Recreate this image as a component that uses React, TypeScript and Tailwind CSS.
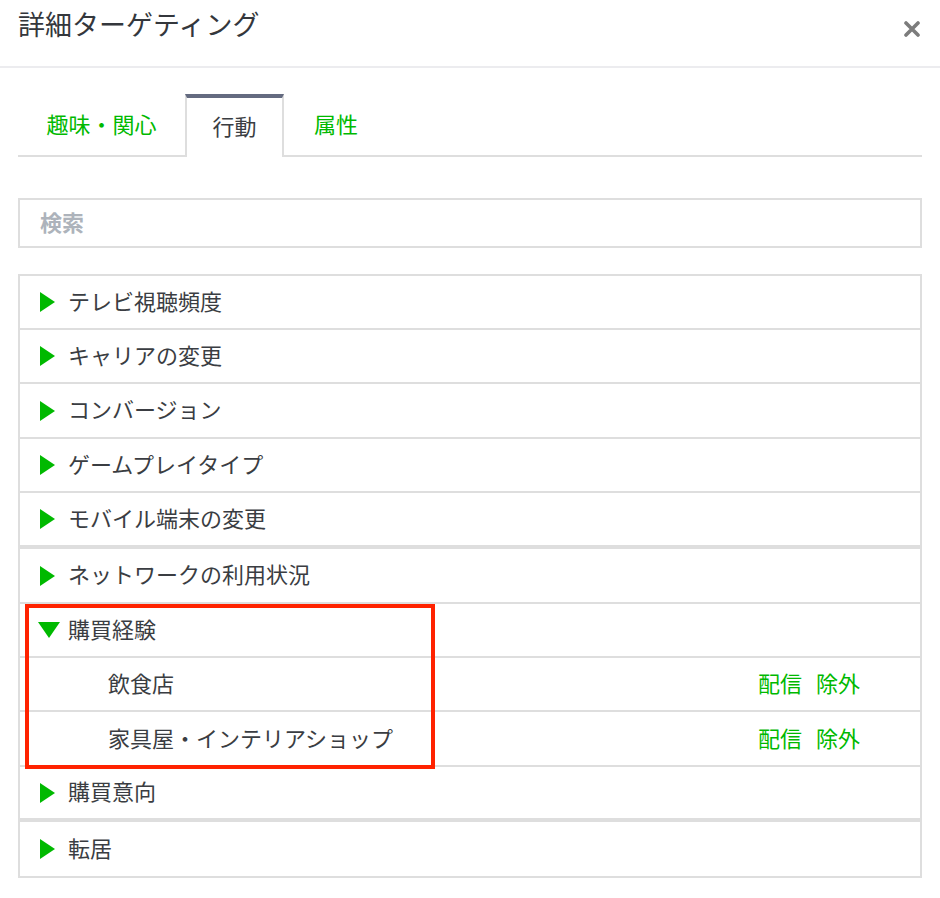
import React from "react";

const font = {
  fontFamily: '"Noto Sans CJK JP", "Noto Sans", sans-serif',
};

type RowData = {
  label: string;
  kind: "closed" | "open" | "child";
  cls: string; // height + bottom border
};

const line = "border-b-2 border-[#dedede]";
const thick = "border-b-[4px] border-[#dedede]";

const rows: RowData[] = [
  { label: "テレビ視聴頻度", kind: "closed", cls: `h-[54px] ${line}` },
  { label: "キャリアの変更", kind: "closed", cls: `h-[54px] ${line}` },
  { label: "コンバージョン", kind: "closed", cls: `h-[55px] ${line}` },
  { label: "ゲームプレイタイプ", kind: "closed", cls: `h-[54px] ${line}` },
  { label: "モバイル端末の変更", kind: "closed", cls: `h-[56px] ${thick}` },
  { label: "ネットワークの利用状況", kind: "closed", cls: `h-[55px] ${line}` },
  { label: "購買経験", kind: "open", cls: `h-[54px] ${line}` },
  { label: "飲食店", kind: "child", cls: `h-[54px] ${line}` },
  { label: "家具屋・インテリアショップ", kind: "child", cls: `h-[55px] ${line}` },
  { label: "購買意向", kind: "closed", cls: `h-[55px] ${thick}` },
  { label: "転居", kind: "closed", cls: "h-[54px]" },
];

function Arrow({ open }: { open?: boolean }) {
  if (open) {
    return (
      <svg width="22" height="16" viewBox="0 0 22 16" className="mr-[8px] -ml-[2px]">
        <polygon points="0,0 22,0 11,16" fill="#00b900" />
      </svg>
    );
  }
  return (
    <svg width="15" height="20" viewBox="0 0 15 20" className="mr-[13px]">
      <polygon points="0,0 15,10 0,20" fill="#00b900" />
    </svg>
  );
}

function Row({ row }: { row: RowData }) {
  if (row.kind === "child") {
    return (
      <div className={`flex items-center pb-[3px] pl-[88px] pr-[60px] text-[22px] text-[#3a3d42] ${row.cls}`}>
        <span className="flex-1">{row.label}</span>
        <span className="text-[#00b900]">配信</span>
        <span className="ml-[14px] text-[#00b900]">除外</span>
      </div>
    );
  }
  return (
    <div className={`flex items-center pl-[20px] text-[22px] text-[#3a3d42] ${row.cls}`}>
      <Arrow open={row.kind === "open"} />
      <span className="-mt-[4px]">{row.label}</span>
    </div>
  );
}

export default function App() {
  return (
    <div className="relative h-[898px] w-[940px] bg-white" style={font}>
      <div className="flex h-[68px] items-start justify-between border-b-2 border-[#ececef] pl-[18px] pr-[20px] pt-[4px]">
        <h1 className="text-[27px] font-normal leading-[40px] text-[#34373c]">
          詳細ターゲティング
        </h1>
        <button className="mt-[17px]">
          <svg width="16" height="16" viewBox="0 0 16 16">
            <path d="M2 2 L14 14 M14 2 L2 14" stroke="#7c7c7c" strokeWidth="3.6" strokeLinecap="round" />
          </svg>
        </button>
      </div>

      <div className="px-[18px] pt-[26px]">
        <div className="flex h-[63px] items-stretch border-b-2 border-[#dedede] text-[22px]">
          <div className="flex w-[167px] items-center justify-center pb-[2px] text-[#00b900]">
            趣味・関心
          </div>
          <div className="-mb-[2px] flex w-[99px] items-center justify-center border-x-2 border-t-[4px] border-x-[#dedede] border-t-[#646b80] bg-white pb-[4px] text-[#3a3d42]">
            行動
          </div>
          <div className="flex w-[104px] items-center justify-center pb-[2px] text-[#00b900]">
            属性
          </div>
        </div>

        <div className="mt-[41px] flex h-[50px] items-center border-2 border-[#dedede] px-[20px] pb-[3px] text-[22px] font-bold text-[#adb3bb]">
          検索
        </div>

        <div className="mt-[26px] border-2 border-[#dedede]">
          {rows.map((r) => (
            <Row key={r.label} row={r} />
          ))}
        </div>
      </div>

      <div className="pointer-events-none absolute left-[25px] top-[604px] h-[165px] w-[410px] border-[4px] border-[#ff2200]" />
    </div>
  );
}
